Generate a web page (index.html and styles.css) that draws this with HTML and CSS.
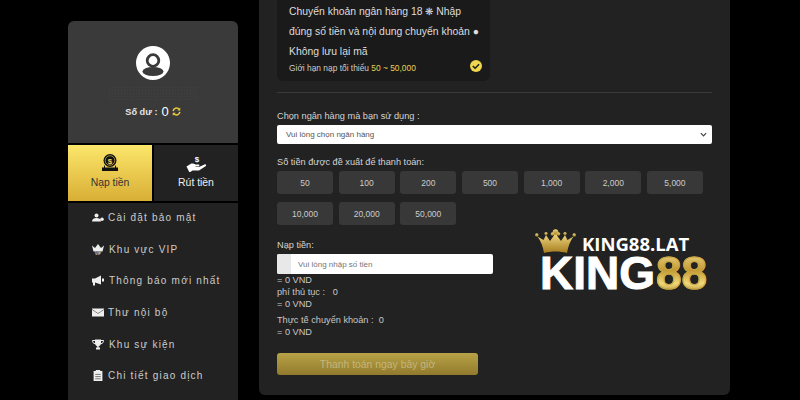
FILE: index.html
```html
<!DOCTYPE html>
<html lang="vi">
<head>
    <meta charset="UTF-8">
    <meta name="viewport" content="width=device-width, initial-scale=1.0">
    <title>KING88 - Nạp tiền</title>
    <link rel="stylesheet" href="styles.css">
</head>
<body>
    <div class="page">
        <aside class="sidebar">
            <div class="profile">
                <svg class="avatar" viewBox="0 0 34 34">
                    <circle cx="17" cy="17" r="17" fill="#fff"/>
                    <circle cx="17" cy="14.500" r="5.800" fill="none" stroke="#3a3a3a" stroke-width="2.800"/>
                    <ellipse cx="17" cy="25.500" rx="10.500" ry="4.500" fill="#3a3a3a"/>
                </svg>
                <div class="username"></div>
                <div class="balance">
                    <span>Số dư :</span>
                    <b>0</b>
                    <svg class="refresh" viewBox="0 0 12 12">
                        <path d="M1.500 5.500a4.500 4.500 0 0 1 8-2.300M10.500 6.500a4.500 4.500 0 0 1-8 2.300" fill="none" stroke="#e8c93c" stroke-width="2"/>
                        <path d="M11 0.500v4h-4zM1 11.500v-4h4z" fill="#e8c93c"/>
                    </svg>
                </div>
            </div>
            <div class="tabs">
                <a class="tab tab-active" href="#">
                    <svg class="tab-icon coin" viewBox="0 0 16 17">
                        <circle cx="8" cy="6.500" r="6.500" fill="#111"/>
                        <circle cx="8" cy="6.500" r="4.800" fill="none" stroke="#f2d95a" stroke-width=".6"/>
                        <path d="M2 11v2.500H0V17h16v-3.500h-2V11l-1 1.200v1.300H3v-1.300z" fill="#111"/>
                        <text x="8" y="9.500" class="dollar" fill="#f2d95a">$</text>
                    </svg>
                    <span>Nạp tiền</span>
                </a>
                <a class="tab" href="#">
                    <svg class="tab-icon hand" viewBox="0 0 20 18">
                        <text x="10.500" y="7.500" class="dollar" fill="#fff">$</text>
                        <path d="M0 12.500l4-2.500c2-1 3-.3 5 .4h3c1.300 0 1.300 1.800 0 1.800H9v.6h4l5-2.300c1.500-.6 2.200.9 1 1.700l-6.500 4.300H6l-3 2z" fill="#fff"/>
                    </svg>
                    <span>Rút tiền</span>
                </a>
            </div>
            <ul class="menu">
                <li>
                    <svg viewBox="0 0 12 8"><circle cx="4.500" cy="2" r="2" fill="#eee"/><path d="M0 8c0-2.500 2-3.500 4.500-3.500S9 5.500 9 8z" fill="#eee"/><circle cx="10" cy="5.800" r="1.800" fill="#eee"/></svg>
                    Cài đặt bảo mật
                </li>
                <li>
                    <svg viewBox="0 0 12 11"><path d="M0 1.500l3 2.500 3-4 3 4 3-2.500-1.500 6h-9z" fill="#eee"/><text x="6" y="11" class="vip">VIP</text></svg>
                    <span class="nudge">Khu vực VIP</span>
                </li>
                <li>
                    <svg viewBox="0 0 12 10"><path d="M0 3h3l6-3v9L3 7v3H1V7H0z" fill="#eee"/><rect x="10" y="3" width="2" height="3" fill="#eee"/></svg>
                    <span class="nudge">Thông báo mới nhất</span>
                </li>
                <li>
                    <svg viewBox="0 0 12 8"><rect width="12" height="8" fill="#eee"/><path d="M0 1l6 4 6-4" fill="none" stroke="#888"/></svg>
                    Thư nội bộ
                </li>
                <li>
                    <svg viewBox="0 0 12 10"><path d="M3 0h6v4c0 1.500-1.500 2.500-2.300 2.700V8H8v2H4V8h1.300V6.700C4.500 6.500 3 5.500 3 4z" fill="#eee"/><path d="M3 1H.5c0 2 1 3 2.500 3.200M9 1h2.500c0 2-1 3-2.500 3.200" fill="none" stroke="#eee"/></svg>
                    <span class="nudge">Khu sự kiện</span>
                </li>
                <li>
                    <svg viewBox="0 0 8 10"><path d="M0 1h2V0h4v1h2v9H0z" fill="#eee"/><path d="M1.500 4h5M1.500 6h5M1.500 8h5" stroke="#555" stroke-width=".7"/></svg>
                    Chi tiết giao dịch
                </li>
            </ul>
        </aside>

        <main class="panel">
            <div class="notice">
                <p>Chuyển khoản ngân hàng 18 ❋ Nhập đúng số tiền và nội dung chuyển khoản ● Không lưu lại mã</p>
                <div class="limit">
                    <span>Giới hạn nạp tối thiểu <em>50 ~ 50,000</em></span>
                    <svg class="check" viewBox="0 0 12 12">
                        <circle cx="6" cy="6" r="6" fill="#f0d64e"/>
                        <path d="M2.800 6l2.300 2.300 4-4" fill="none" stroke="#1a1a1a" stroke-width="1.500"/>
                    </svg>
                </div>
            </div>
            <hr class="divider">

            <label class="field-label">Chọn ngân hàng mà bạn sử dụng :</label>
            <div class="select-box">
                <span>Vui lòng chọn ngân hàng</span>
                <svg viewBox="0 0 8 5"><path d="M1 1l3 3 3-3" fill="none" stroke="#444" stroke-width="1.400"/></svg>
            </div>

            <label class="field-label amount-label">Số tiền được đề xuất để thanh toán:</label>
            <div class="amounts">
                <button>50</button>
                <button>100</button>
                <button>200</button>
                <button>500</button>
                <button>1,000</button>
                <button>2,000</button>
                <button>5,000</button>
                <button>10,000</button>
                <button>20,000</button>
                <button>50,000</button>
            </div>

            <label class="field-label deposit-label">Nạp tiền:</label>
            <div class="input-box">
                <span class="input-addon"></span>
                <span class="placeholder">Vui lòng nhập số tiền</span>
            </div>
            <div class="line">= 0 VND</div>
            <div class="line">phí thủ tục :&nbsp;&nbsp; 0</div>
            <div class="line">= 0 VND</div>
            <div class="line gap-top">Thực tế chuyển khoản :&nbsp; 0</div>
            <div class="line">= 0 VND</div>
            <button class="pay-btn">Thanh toán ngay bây giờ</button>

            <div class="logo">
                <svg class="crown" viewBox="0 0 41 24">
                    <defs>
                        <linearGradient id="gold" x1="0" y1="0" x2="0" y2="1">
                            <stop offset="0" stop-color="#f3dc85"/>
                            <stop offset="1" stop-color="#a67c1e"/>
                        </linearGradient>
                    </defs>
                    <g fill="url(#gold)">
                        <path d="M9 24C8 18 6 12 2.500 7.500l6 3.500 2.500-5 4 6 4-5.500V4h3v2.500l4 5.500 4-6 2.500 5 6-3.500C35 12 33 18 32 24c-7-2-16-2-23 0z"/>
                        <circle cx="20.500" cy="3" r="2.800"/>
                        <circle cx="17.500" cy="5" r="1.800"/>
                        <circle cx="23.500" cy="5" r="1.800"/>
                        <circle cx="1.800" cy="6" r="1.700"/>
                        <circle cx="39.200" cy="6" r="1.700"/>
                        <circle cx="11" cy="4.500" r="1.600"/>
                        <circle cx="30" cy="4.500" r="1.600"/>
                    </g>
                </svg>
                <div class="logo-site">KING88.LAT</div>
                <div class="logo-name">KING<span>88</span></div>
            </div>
        </main>
    </div>
</body>
</html>
```

FILE: styles.css
```css
* {
    box-sizing: border-box;
}
html, body {
    margin: 0;
    height: 400px;
    overflow: hidden;
}
body {
    background-color: #000;
    color: #ddd;
    font-family: "Liberation Sans", Arial, sans-serif;
}
.page {
    display: flex;
    align-items: flex-start;
    gap: 21px;
    padding-left: 68px;
    height: 400px;
}

/* sidebar */
.sidebar {
    width: 170px;
    margin-top: 21px;
    flex: none;
}
.profile {
    height: 122px;
    padding-top: 25px;
    background: #3a3a3a;
    border-radius: 6px 6px 0 0;
    text-align: center;
}
.avatar {
    display: block;
    width: 34px;
    height: 34px;
    margin: 0 auto;
}
.username {
    width: 90px;
    height: 14px;
    margin: 6px auto 0;
    background: radial-gradient(#4a4a4a 40%, transparent 50%) 0 0 / 3px 3px;
    opacity: .3;
}
.balance {
    display: flex;
    justify-content: center;
    align-items: center;
    gap: 3px;
    margin-top: 4px;
    font-size: 9.200px;
    font-weight: bold;
    color: #e6e6e6;
}
.balance b {
    font-size: 13px;
    font-weight: normal;
    color: #fff;
    margin-left: 1px;
}
.refresh {
    width: 9px;
    height: 9px;
}
.tabs {
    display: flex;
    gap: 2px;
    margin-top: 2px;
}
.tab {
    flex: 1;
    height: 56px;
    padding-top: 9px;
    background: #222;
    color: #eee;
    font-size: 10.400px;
    text-align: center;
    text-decoration: none;
}
.tab-active {
    flex: none;
    width: 84px;
    background: linear-gradient(#fbe76a, #d9ae35);
    color: #333;
}
.tab-icon {
    display: block;
    margin: 0 auto;
}
.coin {
    width: 16px;
    height: 17px;
    margin-bottom: 6px;
}
.hand {
    width: 21px;
    height: 18px;
    margin-bottom: 5px;
}
.dollar {
    font-size: 8px;
    font-weight: bold;
    text-anchor: middle;
}
.vip {
    font-size: 3.600px;
    font-weight: bold;
    text-anchor: middle;
    fill: #ddd;
    letter-spacing: 0;
}
.menu {
    list-style: none;
    margin: 2px 0 0;
    padding: 0 0 0 24px;
    background: #222;
    height: 200px;
}
.menu li {
    display: flex;
    align-items: center;
    gap: 4px;
    height: 31.600px;
    padding-bottom: 2px;
    font-size: 10px;
    letter-spacing: 1.200px;
    color: #ccc;
}
.menu svg {
    width: 12px;
    height: 11px;
    flex: none;
}
.nudge {
    margin-left: 1px;
}

/* main panel */
.panel {
    position: relative;
    width: 471px;
    height: 395px;
    padding: 0 18px;
    background: #222;
    border-radius: 0 0 6px 6px;
    flex: none;
}
.notice {
    width: 213px;
    height: 81px;
    padding: 0 8px 0 12px;
    background: #1a1a1a;
    border-radius: 0 0 6px 6px;
}
.notice p {
    margin: 0;
    font-size: 10.400px;
    line-height: 20px;
    color: #ddd;
    padding-top: 2px;
}
.limit {
    display: flex;
    justify-content: space-between;
    align-items: center;
    height: 12px;
    font-size: 8.400px;
    color: #ccc;
}
.limit em {
    font-style: normal;
    color: #e8cf55;
}
.check {
    width: 12px;
    height: 12px;
    margin-top: -4px;
}
.divider {
    width: 435px;
    margin: 11px 0 17px;
    border: 0;
    border-top: 1px solid #3a3a3a;
}
.field-label {
    display: block;
    font-size: 9.200px;
    line-height: 12px;
    color: #d4d4d4;
}
.select-box {
    display: flex;
    justify-content: space-between;
    align-items: center;
    width: 435px;
    height: 19px;
    margin-top: 3px;
    padding: 0 5px 0 9px;
    background: #fff;
    border-radius: 2px;
    font-size: 8px;
    color: #555;
}
.select-box svg {
    width: 7px;
    height: 5px;
}
.amount-label {
    margin-top: 12px;
}
.amounts {
    display: flex;
    flex-wrap: wrap;
    gap: 8px 5.660px;
    width: 435px;
    margin-top: 3px;
}
.amounts button {
    width: 56px;
    height: 23px;
    padding: 0;
    border: none;
    border-radius: 3px;
    background: #383838;
    color: #ccc;
    font-family: inherit;
    font-size: 8.500px;
}
.deposit-label {
    margin-top: 14px;
}
.input-box {
    display: flex;
    align-items: center;
    width: 216px;
    height: 20px;
    margin-top: 3px;
    background: #fff;
    border-radius: 2px;
    overflow: hidden;
}
.input-addon {
    width: 14px;
    height: 100%;
    background: #e8e8e8;
}
.placeholder {
    margin-left: 7px;
    font-size: 8px;
    color: #777;
}
.line {
    font-size: 9.200px;
    line-height: 12px;
    color: #c8c8c8;
}
.line.gap-top {
    margin-top: 4px;
}
.pay-btn {
    display: block;
    width: 201px;
    height: 22px;
    margin-top: 15px;
    border: none;
    border-radius: 3px;
    background: linear-gradient(#b8a246, #917a2c);
    color: #c4b67c;
    font-family: inherit;
    font-size: 10.400px;
}

/* logo sits on top of the form */
.logo {
    position: absolute;
    left: 281px;
    top: 229px;
    width: 170px;
    height: 62px;
}
.crown {
    position: absolute;
    left: -5px;
    top: 0;
    width: 41px;
    height: 24px;
}
.logo-site {
    position: absolute;
    left: 42px;
    top: 8px;
    font-family: "Open Sans", sans-serif;
    font-size: 18.500px;
    line-height: 14px;
    font-weight: 700;
    color: #fff;
    white-space: nowrap;
}
.logo-name {
    position: absolute;
    left: 0;
    top: 27px;
    font-size: 46px;
    line-height: 34px;
    font-weight: 700;
    color: #fff;
    -webkit-text-stroke: 1px #fff;
    white-space: nowrap;
}
.logo-name span {
    margin-left: 1px;
    background: linear-gradient(#f7e49a, #c29a35 45%, #f0d878 70%, #8f6a18);
    -webkit-background-clip: text;
    background-clip: text;
    color: transparent;
    -webkit-text-stroke: 1px #c9a63e;
}
```
